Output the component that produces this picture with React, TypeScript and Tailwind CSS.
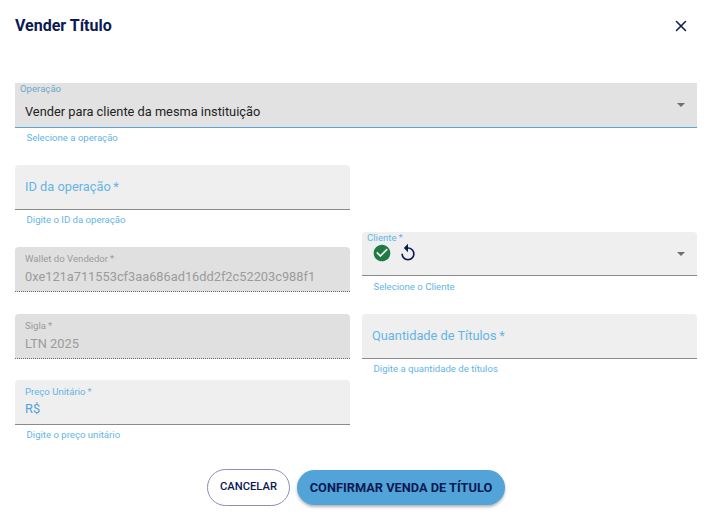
import React from 'react';
import { X } from 'lucide-react';

const Caret = () => (
  <svg width="8" height="4" viewBox="0 0 10 5" className="shrink-0">
    <path d="M0 0h10L5 5z" fill="#6f6f6f" />
  </svg>
);

const Helper = ({ text }: { text: string }) => (
  <p className="mt-[4px] h-[12px] pl-[11.5px] text-[9.6px] leading-[12px] text-[#64b5e6]">{text}</p>
);

const EmptyField = ({ label }: { label: string }) => (
  <div className="flex h-[45px] items-center rounded-t-[4px] border-b border-[#8a8a8a] bg-[#efefef] pl-[10px]">
    <span className="text-[12.8px] leading-[16px] text-[#64b5e6]">{label}&thinsp;*</span>
  </div>
);

const DisabledField = ({ label, value }: { label: string; value: string }) => (
  <div className="flex h-[45px] flex-col rounded-t-[4px] border-b border-dotted border-[#6b6b6b] bg-[#e0e0e0] pl-[10px] pt-[6px]">
    <span className="text-[9.6px] leading-[12px] text-[#9b9b9b]">{label}&thinsp;*</span>
    <span className="mt-[3px] text-[12.8px] leading-[18px] text-[#9b9b9b]">{value}</span>
  </div>
);

export default function App() {
  return (
    <div className="h-[529px] w-[712px] overflow-hidden bg-white font-['Roboto',sans-serif]">
      <div className="flex h-[52px] items-center justify-between pl-[15px] pr-[22px]">
        <h1 className="text-[16px] font-bold leading-[20px] text-[#0b1a52]">Vender Título</h1>
        <X size={18} strokeWidth={2} color="#0b1a52" />
      </div>

      <div className="px-[15px] pt-[31px]">
        <div className="relative flex h-[45px] items-center justify-between border-b border-[#5aa5d6] bg-[#e2e2e2] pl-[10px] pr-[12px]">
          <span className="absolute left-[5px] top-[0px] text-[9.6px] leading-[12px] text-[#6fa8d0]">Operação</span>
          <span className="pt-[14px] text-[12.8px] leading-[16px] text-[#222222]">Vender para cliente da mesma instituição</span>
          <Caret />
        </div>
        <Helper text="Selecione a operação" />

        <div className="mt-[21px] grid grid-cols-[335px_335px] gap-x-[12px]">
          <div className="flex flex-col">
            <EmptyField label="ID da operação" />
            <Helper text="Digite o ID da operação" />
            <div className="mt-[21px]">
              <DisabledField label="Wallet do Vendedor" value="0xe121a711553cf3aa686ad16dd2f2c52203c988f1" />
            </div>
            <div className="mt-[22px]">
              <DisabledField label="Sigla" value="LTN 2025" />
            </div>
            <div className="mt-[21px] flex h-[45px] flex-col rounded-t-[4px] border-b border-[#8a8a8a] bg-[#efefef] pl-[10px] pt-[6px]">
              <span className="text-[9.6px] leading-[12px] text-[#64b5e6]">Preço Unitário&thinsp;*</span>
              <span className="mt-[2px] text-[12.8px] leading-[18px] text-[#4fa3d8]">R$</span>
            </div>
            <Helper text="Digite o preço unitário" />
          </div>

          <div className="flex flex-col pt-[67px]">
            <div className="flex h-[44px] flex-col rounded-t-[4px] border-b border-[#8a8a8a] bg-[#efefef] pl-[5px] pr-[12px]">
              <span className="text-[9.6px] leading-[12px] text-[#64b5e6]">Cliente&thinsp;*</span>
              <div className="flex items-center justify-between pl-[4.5px]">
                <div className="-mt-[1px] flex items-center gap-[6px]">
                  <svg width="20" height="20" viewBox="0 0 24 24">
                    <path
                      d="M12 2C6.48 2 2 6.48 2 12s4.48 10 10 10 10-4.48 10-10S17.52 2 12 2zm-2 15-5-5 1.41-1.41L10 14.17l7.59-7.59L19 8l-9 9z"
                      fill="#1f7a45"
                    />
                  </svg>
                  <svg width="20" height="20" viewBox="0 0 24 24">
                    <path
                      d="M12 5V1L7 6l5 5V7c3.31 0 6 2.69 6 6s-2.69 6-6 6-6-2.69-6-6H4c0 4.42 3.58 8 8 8s8-3.58 8-8-3.58-8-8-8z"
                      fill="#0b1a52"
                    />
                  </svg>
                </div>
                <Caret />
              </div>
            </div>
            <div className="pt-[1px]">
              <Helper text="Selecione o Cliente" />
            </div>
            <div className="mt-[21px]">
              <EmptyField label="Quantidade de Títulos" />
            </div>
            <Helper text="Digite a quantidade de títulos" />
          </div>
        </div>
      </div>

      <div className="mt-[28px] flex items-center justify-center gap-[7px]">
        <button className="h-[37px] w-[83px] rounded-full border border-[#8a8fb5] bg-white text-[11.2px] font-medium text-[#0b1a52]">
          CANCELAR
        </button>
        <button className="h-[35px] w-[208px] rounded-full bg-[#52a3d8] text-[12.8px] font-bold text-[#0b1a52] shadow-[0_2px_3px_rgba(0,0,0,0.3)]">
          CONFIRMAR VENDA DE TÍTULO
        </button>
      </div>
    </div>
  );
}
